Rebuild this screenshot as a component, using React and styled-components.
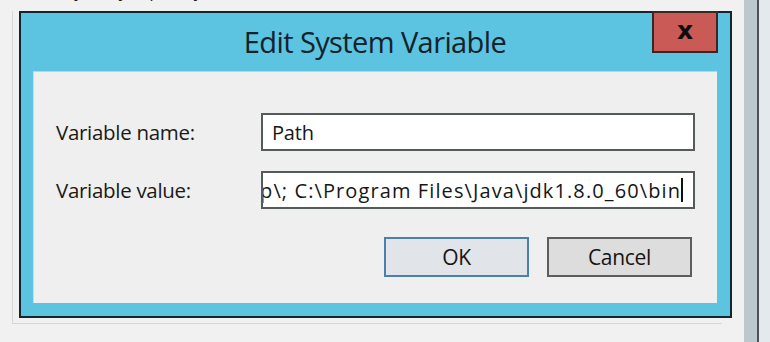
import React from "react";
import styled, { createGlobalStyle } from "styled-components";

const Global = createGlobalStyle`
  html, body { margin: 0; padding: 0; }
  body {
    width: 770px;
    height: 342px;
    overflow: hidden;
    background: #f1f1f1;
    font-family: "Open Sans", "Noto Sans", "DejaVu Sans", sans-serif;
  }
`;

const Page = styled.div`
  display: flex;
  width: 770px;
  height: 342px;
`;

const LeftArea = styled.div`
  width: 744px;
  display: flex;
  flex-direction: column;
`;

const TopStrip = styled.div`
  height: 11px;
  overflow: hidden;
  padding-left: 26px;
`;

const TopText = styled.div`
  margin-top: -19px;
  font-size: 17px;
  line-height: 20px;
  color: #1b1b1b;
  letter-spacing: 3px;
  white-space: nowrap;
`;

const Frame = styled.div`
  margin-left: 12px;
  width: 710px;
  height: 313px;
  border-left: 1px solid #d6d6d6;
  border-bottom: 1px solid #d6d6d6;
  padding-left: 6px;
  box-sizing: border-box;
`;

const Dialog = styled.div`
  width: 713px;
  height: 307px;
  box-sizing: border-box;
  border: 2px solid #13262f;
  background: #5cc3e1;
  display: flex;
  flex-direction: column;
  padding: 0 13px 13px 12px;
`;

const TitleBar = styled.div`
  height: 58px;
  display: grid;
  grid-template-columns: 1fr auto 1fr;
  align-items: start;
`;

const Title = styled.div`
  grid-column: 2;
  align-self: center;
  font-family: "Open Sans", "Noto Sans", sans-serif;
  font-size: 29px;
  letter-spacing: -0.6px;
  color: #14222a;
  margin-top: -2px;
`;

const CloseButton = styled.div`
  grid-column: 3;
  justify-self: end;
  margin-top: -2px;
  margin-right: -1px;
  width: 66px;
  height: 42px;
  box-sizing: border-box;
  background: #c95a55;
  border: 2px solid #3b2624;
  display: flex;
  align-items: center;
  justify-content: center;
  font-family: "DejaVu Sans", sans-serif;
  font-weight: bold;
  font-size: 25px;
  line-height: 1;
  color: #0d0d0d;
  padding-bottom: 3px;
`;

const Panel = styled.div`
  flex: 1;
  background: #efefef;
  border-top: 1px solid #b3d6e4;
  border-left: 1px solid #c5dde6;
  display: flex;
  flex-direction: column;
  padding: 41px 21px 0 22px;
  gap: 20px;
`;

const FieldRow = styled.div`
  display: grid;
  grid-template-columns: 205px 434px;
  align-items: center;
`;

const Label = styled.div`
  font-size: 20.5px;
  color: #1a1a1a;
  letter-spacing: -0.3px;
`;

const Input = styled.div`
  height: 38px;
  box-sizing: border-box;
  border: 2px solid #555a5c;
  background: #ffffff;
  display: flex;
  align-items: center;
  justify-content: ${(p) => (p.$scrolled ? "flex-end" : "flex-start")};
  overflow: hidden;
  padding: 0 10px 0 9px;
  font-size: 20px;
  color: #161616;
  white-space: nowrap;
  letter-spacing: ${(p) => (p.$scrolled ? "1.1px" : "-0.2px")};
`;

const Caret = styled.span`
  display: inline-block;
  width: 2px;
  height: 24px;
  background: #111;
  flex-shrink: 0;
`;

const ButtonRow = styled.div`
  display: flex;
  justify-content: flex-end;
  gap: 18px;
  padding-right: 4px;
  margin-top: 8px;
`;

const Button = styled.div`
  width: 145px;
  height: 40px;
  box-sizing: border-box;
  border: 2px solid ${(p) => (p.$default ? "#4a7fae" : "#5d5d5d")};
  background: ${(p) => (p.$default ? "#e1e4e8" : "#dddddd")};
  display: flex;
  align-items: center;
  justify-content: center;
  font-size: 21px;
  color: #141414;
  letter-spacing: -0.3px;
`;

const RightStrip = styled.div`
  width: 13px;
  background: #bcc8cd;
`;

const DarkLine = styled.div`
  width: 2px;
  background: #4b5059;
`;

const Rest = styled.div`
  flex: 1;
  background: #e3e9ec;
`;

export default function App() {
  return (
    <>
      <Global />
      <Page>
        <LeftArea>
          <TopStrip>
            <TopText>Hitt yxll j fq ldtytt t</TopText>
          </TopStrip>
          <Frame>
            <Dialog>
              <TitleBar>
                <Title>Edit System Variable</Title>
                <CloseButton>x</CloseButton>
              </TitleBar>
              <Panel>
                <FieldRow>
                  <Label>Variable name:</Label>
                  <Input>Path</Input>
                </FieldRow>
                <FieldRow>
                  <Label>Variable value:</Label>
                  <Input $scrolled>
                    <span>%SystemRoot%\System32\WindowsPowerShell\v1.0\;C:\Sap\; C:\Program Files\Java\jdk1.8.0_60\bin</span>
                    <Caret />
                  </Input>
                </FieldRow>
                <ButtonRow>
                  <Button $default>OK</Button>
                  <Button>Cancel</Button>
                </ButtonRow>
              </Panel>
            </Dialog>
          </Frame>
        </LeftArea>
        <RightStrip />
        <DarkLine />
        <Rest />
      </Page>
    </>
  );
}
